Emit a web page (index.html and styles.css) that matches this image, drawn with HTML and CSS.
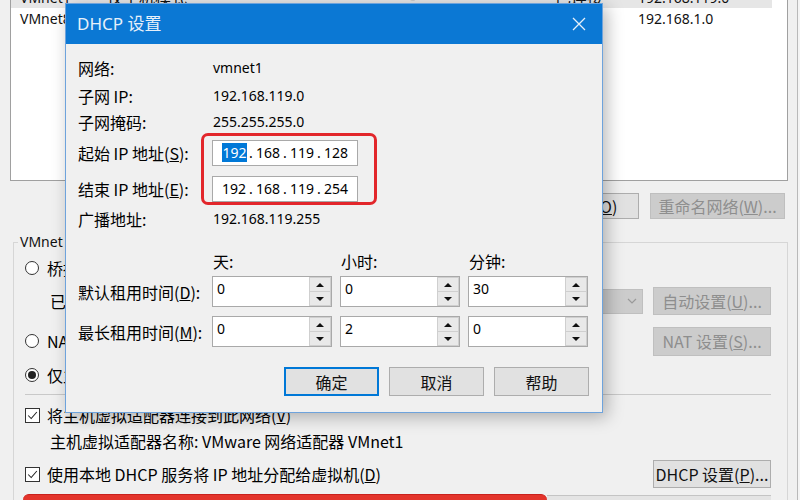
FILE: index.html
```html
<!DOCTYPE html>
<html>
<head>
<meta charset="utf-8">
<link rel="stylesheet" href="styles.css">
</head>
<body>
<div class="stage">
  <div class="win">
    <div class="list">
      <div class="lrow sel"><span class="lat">VMnet1</span><span>仅主机模式</span><span>-</span><span>已连接</span><span class="lat">192.168.119.0</span></div>
      <div class="lrow"><span class="lat">VMnet8</span><span>NAT 模式</span><span>NAT 模式</span><span>已连接</span><span class="lat">192.168.1.0</span></div>
    </div>
    <div class="btnrow">
      <div class="btn w130">移除网络(<u>O</u>)</div>
      <div class="btn dis w135">重命名网络(<u>W</u>)...</div>
    </div>
    <fieldset class="group">
      <legend class="lat">VMnet 信息</legend>
      <div class="gbody">
        <div class="grow ra"><span class="radio"></span><span>桥接模式(将虚拟机直接连接到外部网络)(<u>B</u>)</span></div>
        <div class="grow rb">
          <span class="indent">已桥接至(<u>G</u>):</span>
          <div class="combo dis"><svg class="chev" viewBox="0 0 10 6" width="10" height="6"><path d="M1 1 L5 5 L9 1" fill="none" stroke="#9a9a9a" stroke-width="1.2"/></svg></div>
          <div class="btn dis w118 h28">自动设置(<u>U</u>)...</div>
        </div>
        <div class="grow rc"><span class="radio"></span><span>NAT 模式(与虚拟机共享主机的 IP 地址)(<u>N</u>)</span><div class="btn dis w118 h29 right">NAT 设置(<u>S</u>)...</div></div>
        <div class="grow rd"><span class="radio on"></span><span>仅主机模式(在专用网络内连接虚拟机)(<u>H</u>)</span></div>
        <div class="sep"></div>
        <div class="grow re"><span class="check"><svg viewBox="0 0 15 15" width="13" height="13"><path d="M2.5 7.5 L6 11 L12.5 3.5" fill="none" stroke="#222" stroke-width="1.2"/></svg></span><span>将主机虚拟适配器连接到此网络(<u>V</u>)</span></div>
        <div class="grow rf"><span class="indent">主机虚拟适配器名称: VMware 网络适配器 VMnet1</span></div>
        <div class="grow rg"><span class="check"><svg viewBox="0 0 15 15" width="13" height="13"><path d="M2.5 7.5 L6 11 L12.5 3.5" fill="none" stroke="#222" stroke-width="1.2"/></svg></span><span>使用本地 DHCP 服务将 IP 地址分配给虚拟机(<u>D</u>)</span><div class="btn w118 h28 right">DHCP 设置(<u>P</u>)...</div></div>
        <div class="grow rh"><div class="redbar"></div><div class="graybar"></div></div>
      </div>
    </fieldset>
  </div>

  <div class="dialog">
    <div class="dtitle"><span class="ttext">DHCP 设置</span><svg class="close" viewBox="0 0 14 14" width="14" height="14"><path d="M1 1 L13 13 M13 1 L1 13" stroke="#e6f0fa" stroke-width="1.3" fill="none"/></svg></div>
    <div class="dbody">
      <div class="info">
        <div class="lbl">网络:</div><div class="val">vmnet1</div>
        <div class="lbl">子网 IP:</div><div class="val">192.168.119.0</div>
        <div class="lbl">子网掩码:</div><div class="val">255.255.255.0</div>
        <div class="lbl">起始 IP 地址(<u>S</u>):</div>
        <div class="ip"><span class="oct"><span class="hl">192</span></span><span class="dot">.</span><span class="oct">168</span><span class="dot">.</span><span class="oct">119</span><span class="dot">.</span><span class="oct">128</span></div>
        <div class="lbl">结束 IP 地址(<u>E</u>):</div>
        <div class="ip"><span class="oct">192</span><span class="dot">.</span><span class="oct">168</span><span class="dot">.</span><span class="oct">119</span><span class="dot">.</span><span class="oct">254</span></div>
        <div class="lbl">广播地址:</div><div class="val">192.168.119.255</div>
      </div>
      <div class="lease head"><span></span><span class="hd">天:</span><span class="hd">小时:</span><span class="hd">分钟:</span></div>
      <div class="lease r1">
        <span class="lbl">默认租用时间(<u>D</u>):</span>
        <div class="spin"><div class="field">0</div><div class="arrows"><span class="arr up"></span><span class="arr down"></span></div></div>
        <div class="spin"><div class="field">0</div><div class="arrows"><span class="arr up"></span><span class="arr down"></span></div></div>
        <div class="spin"><div class="field">30</div><div class="arrows"><span class="arr up"></span><span class="arr down"></span></div></div>
      </div>
      <div class="lease r2">
        <span class="lbl">最长租用时间(<u>M</u>):</span>
        <div class="spin"><div class="field">0</div><div class="arrows"><span class="arr up"></span><span class="arr down"></span></div></div>
        <div class="spin"><div class="field">2</div><div class="arrows"><span class="arr up"></span><span class="arr down"></span></div></div>
        <div class="spin"><div class="field">0</div><div class="arrows"><span class="arr up"></span><span class="arr down"></span></div></div>
      </div>
      <div class="dbtns">
        <div class="btn dbtn default">确定</div>
        <div class="btn dbtn">取消</div>
        <div class="btn dbtn">帮助</div>
      </div>
    </div>
    <div class="anno"></div>
  </div>
</div>
</body>
</html>
```

FILE: styles.css
```css
* { box-sizing: border-box; }
body {
  margin: 0;
  background: #f4f4f4;
  font-family: "Noto Sans CJK SC", "Noto Sans", sans-serif;
  font-size: 16px;
  color: #000;
}
u { text-decoration: underline; text-underline-offset: 1px; }
.lat { font-family: "Noto Sans", "Noto Sans CJK SC", sans-serif; font-size: 14px; }

.stage {
  position: relative;
  width: 800px;
  height: 500px;
  overflow: hidden;
  background: #f4f4f4;
}
.win {
  width: 798px;
  height: 500px;
  background: #f0f0f0;
  border-right: 1px solid #b9b9b9;
  overflow: hidden;
}

/* network list */
.list {
  margin-left: 10px;
  width: 778px;
  height: 181px;
  background: #fff;
  border: 1px solid #a0a0a0;
  border-top: none;
  overflow: hidden;
}
.lrow {
  display: grid;
  grid-template-columns: 87px 303px 145px 83px 1fr;
  height: 21px;
  line-height: 21px;
  padding-left: 9px;
  margin-right: 15px;
  white-space: nowrap;
  color: #111;
}
.lrow.sel { background: #e6e6e6; margin-top: -13px; }

/* buttons */
.btn {
  display: flex;
  align-items: center;
  justify-content: center;
  height: 26px;
  background: #e1e1e1;
  border: 1px solid #adadad;
  line-height: 20px;
  white-space: nowrap;
  color: #111;
  flex: none;
}
.btn.dis { background: #cccccc; border-color: #bfbfbf; color: #8e8e8e; }
.w130 { width: 130px; }
.w135 { width: 135px; }
.w118 { width: 118px; }
.h28 { height: 28px; }
.h29 { height: 29px; }
.right { margin-left: auto; }

.btnrow {
  display: flex;
  justify-content: flex-end;
  gap: 11px;
  margin-top: 12px;
  padding-right: 12px;
}

/* group box */
.group {
  margin: 13px 0 0 13px;
  width: 775px;
  height: 300px;
  border: 1px solid #d6d6d6;
  padding: 0;
  min-width: 0;
}
.group legend {
  margin-left: 4px;
  padding: 0 2px;
  line-height: 20px;
  color: #111;
}
.gbody { padding: 0 16px 0 11px; }
.grow {
  display: flex;
  align-items: center;
  white-space: nowrap;
  line-height: 22px;
}
.ra { margin-top: 3px; height: 26px; }
.rb { margin-top: 6px; height: 28px; }
.rc { margin-top: 12px; height: 28px; }
.rd { margin-top: 7px; height: 26px; }
.re { margin-top: 8px; height: 24px; }
.rf { margin-top: 3px; height: 22px; }
.rg { margin-top: 8px; height: 28px; }
.rh { margin-top: 6px; height: 6px; align-items: flex-start; }
.indent { margin-left: 25px; }

.radio {
  width: 14px;
  height: 14px;
  border: 1px solid #333;
  border-radius: 50%;
  background: #fff;
  margin-right: 8px;
  flex: none;
}
.radio.on::after {
  content: "";
  display: block;
  width: 8px;
  height: 8px;
  margin: 2px;
  border-radius: 50%;
  background: #222;
}
.check {
  width: 15px;
  height: 15px;
  border: 1px solid #333;
  background: #fff;
  margin-right: 7px;
  flex: none;
  display: flex;
  align-items: center;
  justify-content: center;
}
.combo {
  flex: 1;
  height: 25px;
  margin: 0 10px 0 20px;
  background: #cccccc;
  border: 1px solid #bfbfbf;
  display: flex;
  align-items: center;
  justify-content: flex-end;
  padding-right: 5px;
}
.sep {
  margin-top: 6px;
  height: 1px;
  background: #c9c9c9;
}
.redbar {
  width: 524px;
  height: 6px;
  margin-left: -2px;
  background: #e3342b;
  border-radius: 7px 7px 0 0;
  border-top: 1px solid #c8201c;
}
.graybar {
  flex: 1;
  height: 5px;
  margin-top: 1px;
  background: #e4e4e4;
  border-top: 1px solid #c4c4c4;
}

/* dialog */
.dialog {
  position: absolute;
  left: 65px;
  top: 3px;
  width: 538px;
  height: 410px;
  border: 1px solid #6ea3dc;
  background: #f0f0f0;
  box-shadow: 4px 4px 16px rgba(0, 0, 0, 0.28);
}
.dtitle {
  height: 40px;
  background: #0b78d4;
  display: flex;
  align-items: center;
  padding-left: 11px;
  padding-right: 16px;
}
.ttext {
  font-family: "Noto Sans", "Noto Sans CJK SC", sans-serif;
  font-size: 17px;
  color: #e6f0fa;
  line-height: 22px;
}
.close { margin-left: auto; }
.dbody { padding: 11px 13px 0 12px; }

.info {
  display: grid;
  grid-template-columns: 134px 146px;
  grid-template-rows: 26px 29px 24px 38px 34px 26px;
  align-items: center;
}
.lbl { line-height: 22px; white-space: nowrap; }
.val {
  padding-left: 1px;
  font-family: "Noto Sans", sans-serif;
  font-size: 14px;
  line-height: 20px;
}
.ip {
  height: 26px;
  background: #fff;
  border: 1px solid #a9a9a9;
  display: flex;
  align-items: center;
  padding-left: 9px;
  font-family: "Noto Sans", sans-serif;
  font-size: 14px;
}
.oct { width: 24px; text-align: center; line-height: 18px; }
.dot { width: 10px; text-align: center; line-height: 18px; }
.hl { background: #0078d7; color: #fff; padding: 0 0.5px; }

.lease {
  display: grid;
  grid-template-columns: 126px 120px 120px 120px;
  column-gap: 8px;
  align-items: center;
}
.lease.head { margin-top: 17px; height: 24px; }
.hd { padding-left: 1px; line-height: 22px; }
.lease.r1 { margin-top: 3px; height: 31px; }
.lease.r2 { margin-top: 9px; height: 31px; }

.spin {
  height: 31px;
  display: flex;
  border: 1px solid #a9a9a9;
  background: #fff;
}
.field {
  flex: 1;
  padding-left: 4px;
  font-family: "Noto Sans", sans-serif;
  font-size: 14px;
  line-height: 24px;
}
.arrows {
  width: 22px;
  display: flex;
  flex-direction: column;
  gap: 1px;
  padding: 1px;
  background: #cfcfcf;
}
.arr {
  flex: 1;
  background: #e9e9e9;
  display: flex;
  align-items: center;
  justify-content: center;
}
.arr.up::before {
  content: "";
  border-left: 4px solid transparent;
  border-right: 4px solid transparent;
  border-bottom: 4px solid #111;
}
.arr.down::before {
  content: "";
  border-left: 4px solid transparent;
  border-right: 4px solid transparent;
  border-top: 4px solid #111;
}

.dbtns {
  display: flex;
  justify-content: flex-end;
  gap: 10px;
  margin-top: 20px;
}
.dbtn { width: 95px; height: 29px; }
.dbtn.default {
  border-color: #0078d7;
  box-shadow: inset 0 0 0 1px #0078d7;
}

.anno {
  position: absolute;
  left: 135px;
  top: 129px;
  width: 176px;
  height: 72px;
  border: 3px solid #e2262b;
  border-radius: 7px;
}
```
